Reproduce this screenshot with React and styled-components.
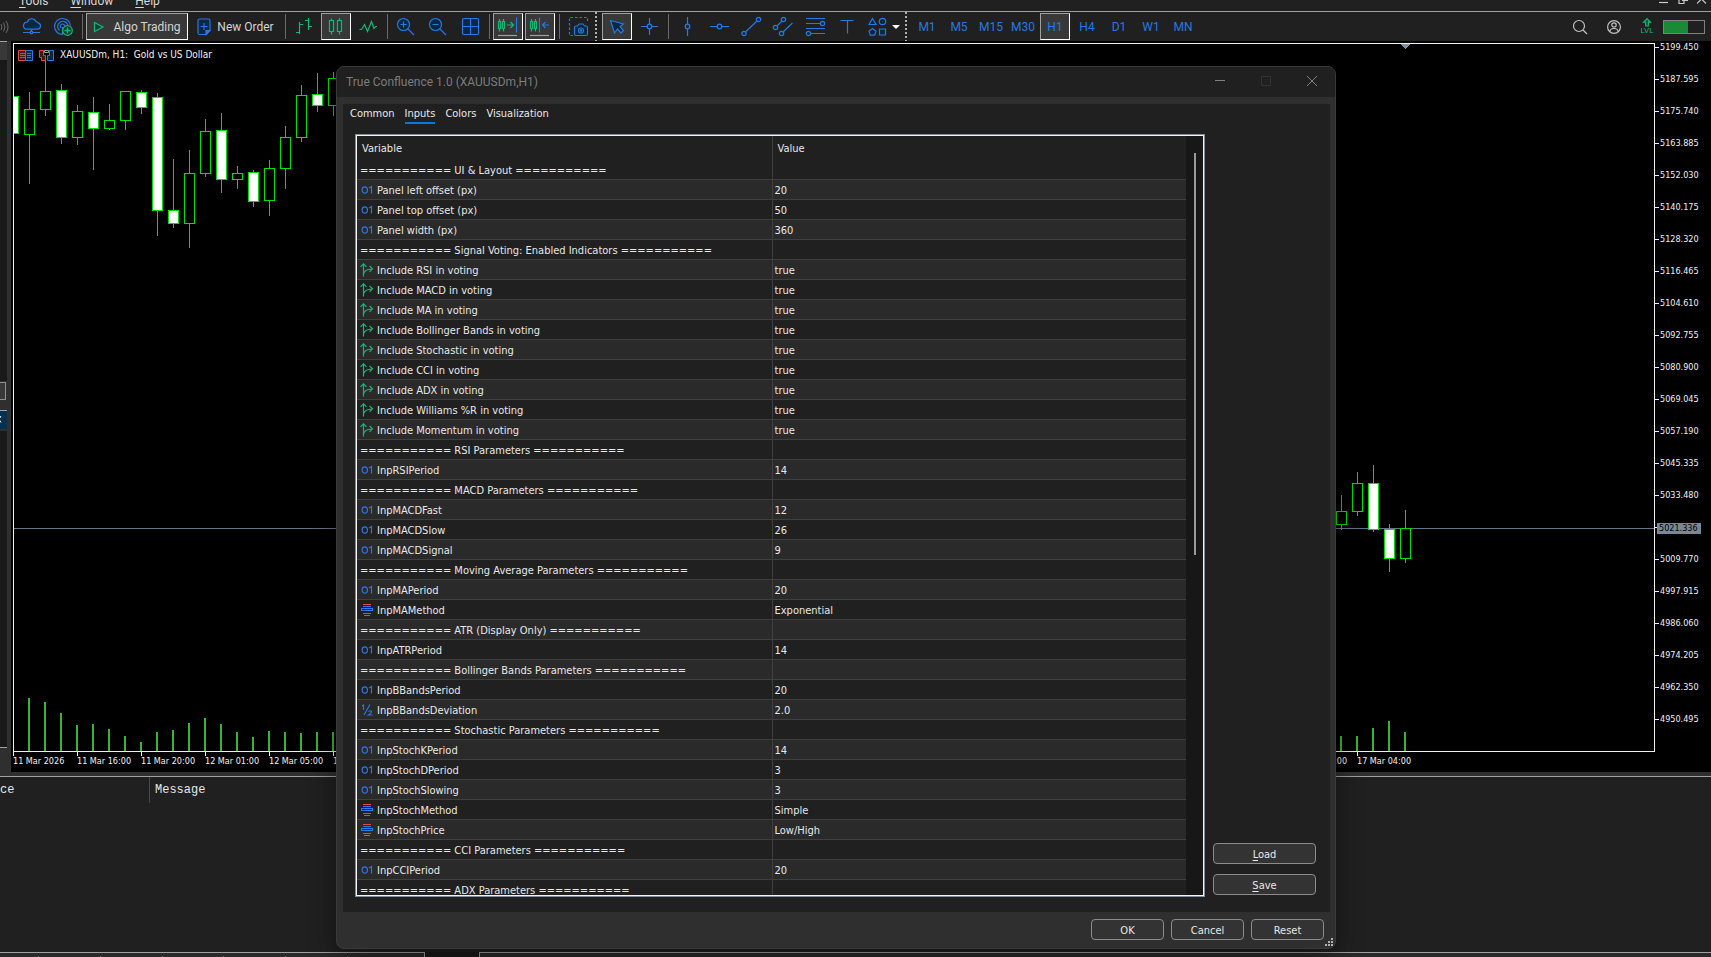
import styled, { createGlobalStyle } from "styled-components";

const blue = '#2678e4';
const green = '#12b877';
const ui = `Roboto, "Noto Sans", sans-serif`;
const small = `"DejaVu Sans Condensed", "DejaVu Sans", sans-serif`;

const GlobalStyle = createGlobalStyle`
  * {
    box-sizing: border-box;
  }

  body {
    margin: 0;
    background: #2f2f2f;
    color: #e8e8e8;
    font-family: ${ui};
    font-size: 12px;
  }

  button {
    font: inherit;
    color: inherit;
    padding: 0;
    border: none;
    background: none;
  }

  svg {
    display: block;
    flex: none;
  }
`;

const Desktop = styled.div`
  position: relative;
  display: flex;
  flex-direction: column;
  height: 100vh;
  min-height: 600px;
  overflow: hidden;
`;

const MenuBar = styled.nav`
  display: flex;
  align-items: flex-end;
  justify-content: space-between;
  height: 12px;
  flex: none;
  padding: 0 4px 2px 19px;
  overflow: hidden;
  background: #202020;
  border-bottom: 1px solid #a0a0a0;
`;

const MenuGroup = styled.div`
  display: flex;
  gap: ${({ $gap }) => $gap}px;
`;

const MenuItem = styled.button`
  line-height: 16px;
  color: #d8d8d8;
  text-underline-offset: 2px;
`;

const ToolBar = styled.div`
  display: flex;
  align-items: center;
  justify-content: space-between;
  height: 29px;
  flex: none;
  background: #202020;
`;

const ToolGroup = styled.div`
  display: flex;
  align-items: center;
  gap: 2px;
`;

const Tool = styled.button`
  display: flex;
  align-items: center;
  justify-content: center;
  gap: ${({ $gap }) => $gap || 0}px;
  width: ${({ $width }) => $width || 30}px;
  height: 27px;
  color: ${({ $color }) => $color || '#d4d4d4'};
  background: ${({ $active }) => ($active ? '#383838' : 'transparent')};
  border: 1px solid;
  border-color: ${({ $active }) => ($active ? '#a0a0a0 #ffffff #ffffff #a0a0a0' : 'transparent')};
  white-space: nowrap;
`;

const EdgeTool = styled(Tool)`
  justify-content: flex-start;
  border: none;
`;

const Divider = styled.span`
  width: 4px;
  height: 25px;
  border-left: 1px solid #6a6a6a;
  margin-left: 2px;
  margin-right: -2px;
`;

const DottedDivider = styled.span`
  width: 5px;
  height: 29px;
  background: repeating-linear-gradient(#b0b0b0 0 2px, transparent 2px 4px) left / 2px 100% no-repeat;
`;

const StatusGroup = styled.div`
  display: flex;
  align-items: center;
  padding-right: 6px;
`;

const StatusButton = styled.button`
  display: flex;
  justify-content: center;
  width: 34px;
`;

const Level = styled.button`
  display: flex;
  flex-direction: column;
  align-items: center;
  width: 32px;
  color: ${green};
  font-size: 8px;
  line-height: 8px;
`;

const Battery = styled.div`
  width: 42px;
  height: 14px;
  border: 1px solid #808080;
`;

const BatteryLevel = styled.div`
  height: 100%;
  background: #1a8a37;
`;

const Workspace = styled.div`
  display: flex;
  flex: 1;
  min-height: 0;
`;

const SideBar = styled.aside`
  display: flex;
  flex-direction: column;
  width: 11px;
  padding: 0 4px 24px 0;
  background: #2f2f2f;
`;

const SidePane = styled.div`
  height: 321px;
  background: #191919;
`;

const SideFill = styled.div`
  flex: 1;
  background: #191919;
  border-bottom: 1px solid #a0a0a0;
`;

const SideTab = styled.div`
  height: 19px;
  overflow: hidden;
  border-top: 1px solid #a0a0a0;
  background: ${({ $active }) => ($active ? '#06304f' : '#383838')};
  margin-bottom: ${({ $active }) => ($active ? 2 : 0)}px;
`;

const SideButton = styled.button`
  display: block;
  width: 6px;
  height: 18px;
  margin: 1px 0 10px;
  background: #383838;
  border: 1px solid #909090;
  border-left: none;
`;

const ChartWindow = styled.main`
  display: grid;
  grid-template-columns: minmax(0, 1fr) 56px;
  grid-template-rows: minmax(0, 1fr) 20px;
  flex: 1;
  min-width: 0;
  padding: 2px 0 0 2px;
  background: #000000;
  color: #f0f0f0;
  font-family: ${small};
  font-size: 9px;
`;

const Plot = styled.div`
  position: relative;
  border: 1px solid #f0f0f0;
  overflow: hidden;
`;

const ChartTitle = styled.div`
  position: absolute;
  top: 4px;
  left: 4px;
  display: flex;
  align-items: center;
  gap: 6px;
  font-size: 10px;
  line-height: 14px;
  white-space: pre;
`;

const PriceAxis = styled.div`
  position: relative;
  overflow: hidden;
  margin-top: -12px;
`;

const Price = styled.div`
  display: flex;
  align-items: center;
  gap: 1px;
  height: 32px;

  &::before {
    content: '';
    width: 4px;
    height: 1px;
    background: #f0f0f0;
  }
`;

const PriceNow = styled.span`
  position: absolute;
  top: 492px;
  left: 2px;
  padding: 0 3px 0 2px;
  line-height: 11px;
  background: #778899;
  color: #000000;
`;

const DateAxis = styled.div`
  display: flex;
  overflow: hidden;
`;

const DateLabel = styled.span`
  flex: none;
  width: 64px;
  line-height: 11px;
  white-space: nowrap;

  &::before {
    content: '';
    display: block;
    width: 1px;
    height: 4px;
    background: #f0f0f0;
  }
`;

const Toolbox = styled.section`
  flex: none;
  height: 176px;
  margin-top: 4px;
  background: #202020;
  border-top: 1px solid #a0a0a0;
  font-family: "Liberation Mono", monospace;
`;

const ToolboxHead = styled.div`
  display: grid;
  grid-template-columns: 149px 1fr;
  line-height: 26px;
`;

const HeadCell = styled.span`
  padding-left: ${({ $first }) => ($first ? 0 : 5)}px;
  border-left: ${({ $first }) => ($first ? 'none' : '1px solid #484848')};
`;

const BottomTabs = styled.footer`
  display: flex;
  flex: none;
  gap: 54px;
  height: 5px;
  background: #191919;
`;

const BottomTab = styled.div`
  display: flex;
  justify-content: space-between;
  align-items: flex-end;
  flex: ${({ $width }) => ($width ? `none` : 1)};
  width: ${({ $width }) => ($width ? `${$width}px` : 'auto')};
  padding: 0 76px 0 38px;
  background: #2a2a2a;
  border: solid #a0a0a0;
  border-width: ${({ $width }) => ($width ? '1px 1px 0 0' : '1px 0 0 1px')};
`;

const Tick = styled.span`
  width: 1px;
  height: 1px;
  background: #707070;
`;

const Dialog = styled.section`
  position: absolute;
  top: 66px;
  right: 375px;
  bottom: 8px;
  left: 336px;
  display: flex;
  flex-direction: column;
  background: #2f2f2f;
  border: 1px solid #3a3a3a;
  border-radius: 8px;
  box-shadow: 0 8px 28px rgba(0, 0, 0, 0.45);
  overflow: hidden;
`;

const TitleBar = styled.header`
  display: flex;
  align-items: center;
  justify-content: space-between;
  height: 30px;
  flex: none;
  padding-left: 9px;
  background: #202020;
  color: #7c7c7c;
`;

const Title = styled.h1`
  margin: 0;
  font-size: 12px;
  font-weight: 400;
`;

const WindowButton = styled.button`
  width: 46px;
  height: 28px;
  color: ${({ disabled }) => (disabled ? '#333333' : '#808080')};

  svg {
    margin: 0 auto 2px;
  }
`;

const Content = styled.div`
  display: flex;
  flex-direction: column;
  flex: 1;
  min-height: 0;
  margin: 7px 5px 0 6px;
  padding: 0 14px 15px 12px;
  background: #202020;
  font-family: ${small};
  font-size: 11px;
`;

const Tabs = styled.div`
  display: flex;
  gap: 10px;
  height: 30px;
  margin-left: -5px;
`;

const TabButton = styled.button`
  height: 20px;
  padding-top: 1px;
  line-height: 17px;
  border-bottom: 2px solid ${({ $active }) => ($active ? '#0a78d4' : 'transparent')};
`;

const Columns = styled.div`
  display: flex;
  gap: 8px;
  flex: 1;
  min-height: 0;
`;

const ListFrame = styled.div`
  display: flex;
  flex: 1;
  min-width: 0;
  overflow: hidden;
  border: 1px solid #828d99;
  outline: 1px solid #f4f4f4;
  outline-offset: -2px;
  padding: 1px;
`;

const ListBody = styled.div`
  flex: 1;
  min-width: 0;
  overflow: hidden;
`;

const ScrollBar = styled.div`
  width: 17px;
  padding: 17px 7px 0 8px;
  background: #171717;
`;

const Thumb = styled.div`
  height: 402px;
  background: #999999;
`;

const InputTable = styled.table`
  width: 100%;
  table-layout: fixed;
  border-collapse: separate;
  border-spacing: 0;
`;

const VariableHead = styled.th`
  width: ${({ $value }) => ($value ? 'auto' : 'calc(50% - 2px)')};
  height: 24px;
  padding: 0 5px;
  text-align: left;
  font-weight: 400;
  border-left: ${({ $value }) => ($value ? '1px solid #404040' : 'none')};
`;

const Row = styled.tr`
  background: ${({ $alt }) => ($alt ? '#2a2a2a' : '#202020')};
`;

const Cell = styled.td`
  height: 20px;
  padding: ${({ $value }) => ($value ? '2px 2px 0' : '2px 3px 0')};
  border-bottom: 1px solid #404040;
  border-left: ${({ $value }) => ($value ? '1px solid #404040' : 'none')};
  white-space: nowrap;
`;

const Variable = styled.div`
  display: flex;
  align-items: center;
  gap: 4px;
`;

const IconSlot = styled.span`
  display: flex;
  justify-content: center;
  width: 13px;
  flex: none;
  margin: -2px 0;
  padding-bottom: 2px;
`;

const Actions = styled.div`
  display: flex;
  flex-direction: column;
  justify-content: flex-end;
  gap: 10px;
  width: 103px;
  padding-bottom: 2px;
`;

const PushButton = styled.button`
  width: ${({ $wide }) => ($wide ? '103px' : '73px')};
  height: 21px;
  padding-top: 1px;
  background: #333333;
  border: 1px solid #8c8c8c;
  border-radius: 4px;
  text-underline-offset: 2px;
`;

const Footer = styled.footer`
  display: flex;
  justify-content: flex-end;
  align-items: flex-start;
  gap: 7px;
  height: 36px;
  flex: none;
  padding: 7px 11px 0 0;
  font-family: ${small};
  font-size: 11px;
`;

const Grip = styled.span`
  position: absolute;
  right: 2px;
  bottom: 2px;
`;

const iconProps = {
  width: 22,
  height: 21,
  viewBox: '0 0 22 21',
  fill: 'none',
  stroke: blue,
  strokeWidth: 1.2,
};

const navy = '#08283f';

const icons = {
  cloud: (
    <svg {...iconProps}>
      <path fill={navy} d="M6 13.200h11.500a3.200 3.200 0 0 0 .6-6.300 2.600 2.600 0 0 0-2-1.200A4.600 4.600 0 0 0 7.400 6 3.700 3.700 0 0 0 6 13.200z" />
      <path d="M11.500 13.500v2M3 16.500h7M13 16.500h7" />
      <circle cx="11.500" cy="16.500" r="1.300" />
    </svg>
  ),
  signals: (
    <svg {...iconProps}>
      <path d="M10.500 18.500A8 8 0 1 1 18.500 9.500M7.500 14.500A5.200 5.200 0 1 1 15.800 9M9 12A2.300 2.300 0 1 1 12.800 9.800M10.500 11v8" />
      <circle cx="15.500" cy="14.500" r="4.800" fill="#0b3a2a" stroke={green} />
      <path stroke={green} strokeWidth="1.500" d="M12.500 14.500h6M15.500 11.500v6" />
    </svg>
  ),
  play: (
    <svg width="12" height="12" viewBox="0 0 12 12" fill="none" stroke={green} strokeWidth="1.200">
      <path fill="#123f2e" d="M1.500 1.500v9l8.500-4.500z" />
    </svg>
  ),
  order: (
    <svg width="14" height="18" viewBox="0 0 14 18" fill="none" stroke={blue} strokeWidth="1.200">
      <path fill={navy} d="M2.500 1h9q1.500 0 1.500 1.500v10L9 16.500H2.500Q1 16.500 1 15V2.500Q1 1 2.500 1z" />
      <path d="M7 5v7M3.500 8.500h7" />
      <path fill={blue} d="M9 16.500v-4h4z" />
    </svg>
  ),
  bars: (
    <svg {...iconProps} stroke={green}>
      <path d="M6.500 6v12M3 16.500h3.500M6.500 8.500H10M15.500 2v12M12 4.500h3.500M15.500 10.500H19" />
    </svg>
  ),
  candles: (
    <svg {...iconProps} stroke={green}>
      <path fill="#12402f" d="M4.500 4.500h4v11h-4zM12.500 4.500h4v11h-4z" />
      <path d="M6.500 2.500v2M6.500 15.500v3M14.500 2v2.500M14.500 15.500v3" />
    </svg>
  ),
  line: (
    <svg {...iconProps} stroke={green}>
      <path d="M2.500 13.500h2l3-5 3 7 4-10 2.500 7 1.500-2h1.500" />
    </svg>
  ),
  zoomIn: (
    <svg {...iconProps}>
      <circle cx="8.500" cy="8.500" r="6" fill={navy} />
      <path d="M13 13l6 6M8.500 5.500v6M5.500 8.500h6" />
    </svg>
  ),
  zoomOut: (
    <svg {...iconProps}>
      <circle cx="8.500" cy="8.500" r="6" fill={navy} />
      <path d="M13 13l6 6M5.500 8.500h6" />
    </svg>
  ),
  grid: (
    <svg {...iconProps}>
      <rect x="3.500" y="2.500" width="16" height="16" rx="1.500" fill={navy} />
      <path d="M11.500 2.500v16M3.500 10.500h16" />
    </svg>
  ),
  scroll: (
    <svg {...iconProps}>
      <path stroke={green} fill="#12402f" d="M1.500 5.500h2v7h-2zM5.500 5.500h2v7h-2z" />
      <path stroke={green} d="M2.500 3v2.500M2.500 12.500v3M6.500 3v2.500M6.500 12.500v3M10 9h6.500M13.500 6l3 3-3 3" />
      <path d="M19.500 1.500v15" />
      <path stroke="#a0a0a0" d="M1 19.500h19" />
    </svg>
  ),
  shift: (
    <svg {...iconProps}>
      <path stroke={green} fill="#12402f" d="M1.500 5.500h2v7h-2zM5.500 5.500h2v7h-2z" />
      <path stroke={green} d="M2.500 3v2.500M2.500 12.500v3M6.500 3v2.500M6.500 12.500v3" />
      <path d="M10.500 1.500v15M20 9h-6.500M16.500 6l-3 3 3 3" />
      <path stroke="#a0a0a0" d="M1 19.500h19" />
    </svg>
  ),
  camera: (
    <svg {...iconProps}>
      <path strokeDasharray="2.500 2" d="M6 19.500H2.500v-18h18V7" />
      <path fill={navy} d="M7.500 11.500q0-1.500 1.500-1.500h1.500l1.500-2h4l1.500 2H19q1.500 0 1.500 1.500V18q0 1.500-1.500 1.500H9q-1.500 0-1.500-1.500z" />
      <circle cx="14" cy="14.500" r="2.500" />
      <circle cx="14" cy="14.500" r=".6" />
    </svg>
  ),
  cursor: (
    <svg {...iconProps}>
      <path fill={navy} d="M4.500 4.500l4 12.500 3-4 3.500 4 2.500-2.500-3.500-4 3.500-2.500z" />
    </svg>
  ),
  cross: (
    <svg {...iconProps}>
      <circle cx="11.500" cy="10.500" r="2.300" fill={navy} />
      <path d="M11.500 2v6M11.500 13v6M3 10.500h6M14 10.500h6" />
    </svg>
  ),
  vertical: (
    <svg {...iconProps}>
      <circle cx="11.500" cy="10.500" r="2.300" fill={navy} />
      <path d="M11.500 1v7M11.500 13v7" />
    </svg>
  ),
  horizontal: (
    <svg {...iconProps}>
      <circle cx="11.500" cy="10.500" r="2.300" fill={navy} />
      <path d="M2 10.500h7M14 10.500h7" />
    </svg>
  ),
  trend: (
    <svg {...iconProps}>
      <path d="M5.500 16L17 5" />
      <circle cx="4" cy="17.500" r="2.200" fill={navy} />
      <circle cx="18.500" cy="3.500" r="2.200" fill={navy} />
    </svg>
  ),
  channel: (
    <svg {...iconProps}>
      <path d="M5 10l5-5M11 16l9.500-9" />
      <circle cx="3.500" cy="11.500" r="2.200" fill={navy} />
      <circle cx="11.500" cy="3.500" r="2.200" fill={navy} />
      <circle cx="9.500" cy="17.500" r="2.200" fill={navy} />
    </svg>
  ),
  fibo: (
    <svg {...iconProps}>
      <path d="M2 2.500h19M2 7.500h14M2 12.500h19M7 17.500h14" />
      <circle cx="18.500" cy="7.500" r="2.200" fill={navy} />
      <circle cx="4.500" cy="17.500" r="2.200" fill={navy} />
    </svg>
  ),
  text: (
    <svg {...iconProps}>
      <path d="M4.500 4.500h13M11.500 4.500v13" />
    </svg>
  ),
  shapes: (
    <svg {...iconProps}>
      <path fill={navy} d="M5.500 2.500l3.500 6H2zM12.500 13h6v6h-6zM5.500 12.500l3.500 2.700-1.300 4H3.300L2 15.200z" />
      <circle cx="15.500" cy="5.500" r="3.200" fill={navy} />
    </svg>
  ),
  waves: (
    <svg width="10" height="14" viewBox="0 0 10 14" fill="none" stroke="#686868">
      <path d="M1 4q2 3 0 6M3.500 2.500q3 4.500 0 9M6 1q4 6 0 12" />
    </svg>
  ),
  search: (
    <svg width="16" height="16" viewBox="0 0 16 16" fill="none" stroke="#c0c0c0" strokeWidth="1.200">
      <circle cx="7" cy="7" r="5.500" />
      <path d="M11 11l4 4" />
    </svg>
  ),
  user: (
    <svg width="16" height="16" viewBox="0 0 16 16" fill="none" stroke="#c0c0c0" strokeWidth="1.200">
      <circle cx="8" cy="8" r="6.400" />
      <circle cx="8" cy="6" r="2.200" />
      <path d="M4 12.500q0-3 4-3t4 3" />
    </svg>
  ),
  number: (
    <svg width="12" height="10" viewBox="0 0 12 10" fill="none" stroke={blue} strokeWidth="1.200">
      <ellipse cx="3.800" cy="5" rx="2.700" ry="3.200" />
      <path d="M8 3l2.500-1.500V8.500" />
    </svg>
  ),
  half: (
    <svg width="12" height="14" viewBox="0 0 12 14" fill="none" stroke={blue} strokeWidth="1.200">
      <path d="M1 3l1.500-1v5M9 1.500L3 12M7.500 8.500q2-1.500 3 0 .3 1-3 3.500h4" />
    </svg>
  ),
  branch: (
    <svg width="14" height="14" viewBox="0 0 14 14" fill="none" stroke={green} strokeWidth="1.200">
      <path d="M3.500 13.500V1M.5 3.800l3-3 3 3M3.500 11q1-4.700 8.500-5M9.500 2.800l3 3-3 3" />
    </svg>
  ),
  list: (
    <svg width="12" height="12" viewBox="0 0 12 12" fill="none" shapeRendering="crispEdges">
      <path stroke="#e04848" d="M2 .5h8M2 9.500h8M3 11.500h6" />
      <path stroke={blue} d="M2 2.500h8M.5 4.500h11v2H.5z" />
    </svg>
  ),
};

// body top/bottom and wick high/low, one bar every 16px
const candles = [
  [0, 96, 96, 134, 134, 1],
  [1, 92, 109, 135, 184, 0],
  [2, 58, 91, 110, 116, 0],
  [3, 84, 90, 138, 144, 1],
  [4, 105, 111, 138, 145, 0],
  [5, 97, 112, 129, 170, 1],
  [6, 104, 120, 129, 130, 0],
  [7, 91, 91, 121, 130, 0],
  [8, 90, 92, 108, 114, 1],
  [9, 93, 97, 211, 236, 1],
  [10, 159, 210, 224, 228, 1],
  [11, 150, 173, 224, 248, 0],
  [12, 119, 131, 174, 177, 0],
  [13, 113, 130, 180, 193, 1],
  [14, 166, 173, 180, 189, 0],
  [15, 170, 172, 202, 207, 1],
  [16, 160, 168, 201, 216, 0],
  [17, 126, 137, 169, 189, 0],
  [18, 85, 95, 138, 142, 0],
  [19, 73, 94, 106, 112, 1],
  [20, 72, 78, 106, 116, 0],
  [83, 495, 511, 525, 530, 0],
  [84, 472, 483, 512, 516, 0],
  [85, 465, 483, 530, 532, 1],
  [86, 524, 529, 559, 572, 1],
  [87, 510, 528, 559, 563, 0],
];

const volumes = [
  [1, 53], [2, 49], [3, 38], [4, 26], [5, 27], [6, 22], [7, 15], [8, 9], [9, 19], [10, 21],
  [11, 28], [12, 33], [13, 27], [14, 19], [15, 14], [16, 20], [17, 19], [18, 18], [19, 19], [20, 19],
  [83, 15], [84, 15], [85, 23], [86, 30], [87, 19],
];

const prices = [
  '5199.450', '5187.595', '5175.740', '5163.885', '5152.030', '5140.175', '5128.320', '5116.465',
  '5104.610', '5092.755', '5080.900', '5069.045', '5057.190', '5045.335', '5033.480', '',
  '5009.770', '4997.915', '4986.060', '4974.205', '4962.350', '4950.495',
];

const dates = [
  '11 Mar 2026', '11 Mar 16:00', '11 Mar 20:00', '12 Mar 01:00', '12 Mar 05:00', '12 Mar 09:00',
  ...Array(14).fill(''), '17 Mar 00:00', '17 Mar 04:00',
];

const line = '='.repeat(11);

const inputs = [
  { section: 'UI & Layout' },
  { icon: 'number', name: 'Panel left offset (px)', value: '20' },
  { icon: 'number', name: 'Panel top offset (px)', value: '50' },
  { icon: 'number', name: 'Panel width (px)', value: '360' },
  { section: 'Signal Voting: Enabled Indicators' },
  ...['RSI', 'MACD', 'MA', 'Bollinger Bands', 'Stochastic', 'CCI', 'ADX', 'Williams %R', 'Momentum'].map((name) => ({
    icon: 'branch', name: `Include ${name} in voting`, value: 'true',
  })),
  { section: 'RSI Parameters' },
  { icon: 'number', name: 'InpRSIPeriod', value: '14' },
  { section: 'MACD Parameters' },
  { icon: 'number', name: 'InpMACDFast', value: '12' },
  { icon: 'number', name: 'InpMACDSlow', value: '26' },
  { icon: 'number', name: 'InpMACDSignal', value: '9' },
  { section: 'Moving Average Parameters' },
  { icon: 'number', name: 'InpMAPeriod', value: '20' },
  { icon: 'list', name: 'InpMAMethod', value: 'Exponential' },
  { section: 'ATR (Display Only)' },
  { icon: 'number', name: 'InpATRPeriod', value: '14' },
  { section: 'Bollinger Bands Parameters' },
  { icon: 'number', name: 'InpBBandsPeriod', value: '20' },
  { icon: 'half', name: 'InpBBandsDeviation', value: '2.0' },
  { section: 'Stochastic Parameters' },
  { icon: 'number', name: 'InpStochKPeriod', value: '14' },
  { icon: 'number', name: 'InpStochDPeriod', value: '3' },
  { icon: 'number', name: 'InpStochSlowing', value: '3' },
  { icon: 'list', name: 'InpStochMethod', value: 'Simple' },
  { icon: 'list', name: 'InpStochPrice', value: 'Low/High' },
  { section: 'CCI Parameters' },
  { icon: 'number', name: 'InpCCIPeriod', value: '20' },
  { section: 'ADX Parameters' },
];

const Candles = () => {
  return (
    <svg width="100%" height="100%" shapeRendering="crispEdges">
      <rect x="0" y="484" width="100%" height="1" fill="#64748b" />
      {volumes.map(([i, h]) => (
        <rect key={i} x={i * 16 - 2} y={707 - h} width="2" height={h} fill="#2fb92f" />
      ))}
      {candles.map(([i, high, top, bottom, low, down]) => (
        <g key={i}>
          <rect x={i * 16 - 1} y={high - 44} width="1" height={low - high} fill="#00e000" />
          <rect
            x={i * 16 - 5.5}
            y={top - 43.5}
            width="10"
            height={bottom - top - 1}
            fill={down ? '#ffffff' : '#000000'}
            stroke="#00e000"
          />
        </g>
      ))}
      <path fill="#8090a4" d="M1387 0h9l-4.500 5z" />
    </svg>
  );
};

const Toolbar = () => {
  return (
    <ToolBar>
      <ToolGroup>
        <EdgeTool $width={14} aria-label="Signals">{icons.waves}</EdgeTool>
        <Tool aria-label="Cloud">{icons.cloud}</Tool>
        <Tool aria-label="Hosting">{icons.signals}</Tool>
        <Divider />
        <Tool $active $width={102} $gap={8}>{icons.play}Algo Trading</Tool>
        <Tool $width={91} $gap={6}>{icons.order}New Order</Tool>
        <Divider />
        <Tool aria-label="Bars">{icons.bars}</Tool>
        <Tool $active aria-label="Candles">{icons.candles}</Tool>
        <Tool aria-label="Line">{icons.line}</Tool>
        <Divider />
        <Tool aria-label="Zoom in">{icons.zoomIn}</Tool>
        <Tool aria-label="Zoom out">{icons.zoomOut}</Tool>
        <Tool aria-label="Tile windows">{icons.grid}</Tool>
        <Divider />
        <Tool $active aria-label="Auto scroll">{icons.scroll}</Tool>
        <Tool $active aria-label="Chart shift">{icons.shift}</Tool>
        <Divider />
        <Tool aria-label="Screenshot">{icons.camera}</Tool>
        <DottedDivider />
        <Tool $active aria-label="Cursor">{icons.cursor}</Tool>
        <Tool aria-label="Crosshair">{icons.cross}</Tool>
        <Divider />
        <Tool aria-label="Vertical line">{icons.vertical}</Tool>
        <Tool aria-label="Horizontal line">{icons.horizontal}</Tool>
        <Tool aria-label="Trendline">{icons.trend}</Tool>
        <Tool aria-label="Channel">{icons.channel}</Tool>
        <Tool aria-label="Fibonacci">{icons.fibo}</Tool>
        <Tool aria-label="Text">{icons.text}</Tool>
        <Tool $width={39} $gap={3} aria-label="Shapes">
          {icons.shapes}
          <svg width="8" height="5" viewBox="0 0 8 5"><path fill="#ffffff" d="M0 1h8L4 5z" /></svg>
        </Tool>
        <DottedDivider />
        {['M1', 'M5', 'M15', 'M30', 'H1', 'H4', 'D1', 'W1', 'MN'].map((frame) => (
          <Tool key={frame} $color={blue} $active={frame === 'H1'}>{frame}</Tool>
        ))}
      </ToolGroup>
      <StatusGroup>
        <StatusButton aria-label="Search">{icons.search}</StatusButton>
        <StatusButton aria-label="Account">{icons.user}</StatusButton>
        <Level>
          <svg width="10" height="9" viewBox="0 0 10 9" fill="#12402f" stroke={green} strokeWidth="1.200">
            <path d="M5 .8l3.500 3.400H6.300V8H3.700V4.200H1.500z" />
          </svg>
          LVL
        </Level>
        <Battery>
          <BatteryLevel style={{ width: '60%' }} />
        </Battery>
      </StatusGroup>
    </ToolBar>
  );
};

const InputsDialog = () => {
  return (
    <Dialog role="dialog">
      <TitleBar>
        <Title>True Confluence 1.0 (XAUUSDm,H1)</Title>
        <MenuGroup $gap={0}>
          <WindowButton aria-label="Minimize">
            <svg width="10" height="10" viewBox="0 0 10 10" stroke="currentColor"><path d="M0 4.500h10" /></svg>
          </WindowButton>
          <WindowButton aria-label="Maximize" disabled>
            <svg width="10" height="10" viewBox="0 0 10 10" fill="none" stroke="currentColor"><path d="M.5.5h9v9h-9z" /></svg>
          </WindowButton>
          <WindowButton aria-label="Close">
            <svg width="10" height="10" viewBox="0 0 10 10" stroke="currentColor"><path d="M0 0l10 10M10 0L0 10" /></svg>
          </WindowButton>
        </MenuGroup>
      </TitleBar>
      <Content>
        <Tabs>
          {['Common', 'Inputs', 'Colors', 'Visualization'].map((tab) => (
            <TabButton key={tab} $active={tab === 'Inputs'}>{tab}</TabButton>
          ))}
        </Tabs>
        <Columns>
          <ListFrame>
            <ListBody>
              <InputTable>
                <thead>
                  <tr>
                    <VariableHead>Variable</VariableHead>
                    <VariableHead $value>Value</VariableHead>
                  </tr>
                </thead>
                <tbody>
                  {inputs.map(({ section, icon, name, value }, index) => (
                    <Row key={section || name} $alt={index % 2 === 1}>
                      <Cell>
                        {section ? `${line} ${section} ${line}` : (
                          <Variable>
                            <IconSlot>{icons[icon]}</IconSlot>
                            {name}
                          </Variable>
                        )}
                      </Cell>
                      <Cell $value>{value}</Cell>
                    </Row>
                  ))}
                </tbody>
              </InputTable>
            </ListBody>
            <ScrollBar>
              <Thumb />
            </ScrollBar>
          </ListFrame>
          <Actions>
            <PushButton $wide><u>L</u>oad</PushButton>
            <PushButton $wide><u>S</u>ave</PushButton>
          </Actions>
        </Columns>
      </Content>
      <Footer>
        <PushButton>OK</PushButton>
        <PushButton>Cancel</PushButton>
        <PushButton>Reset</PushButton>
      </Footer>
      <Grip>
        <svg width="8" height="8" viewBox="0 0 8 8" fill="#b0b0b0">
          <path d="M6 0h2v2H6zM3 3h2v2H3zM6 3h2v2H6zM0 6h2v2H0zM3 6h2v2H3zM6 6h2v2H6z" />
        </svg>
      </Grip>
    </Dialog>
  );
};

const App = () => {
  return (
    <Desktop>
      <GlobalStyle />
      <MenuBar>
        <MenuGroup $gap={22}>
          <MenuItem><u>T</u>ools</MenuItem>
          <MenuItem><u>W</u>indow</MenuItem>
          <MenuItem><u>H</u>elp</MenuItem>
        </MenuGroup>
        <MenuGroup $gap={9}>
          <svg width="10" height="10" viewBox="0 0 10 10" stroke="#c8c8c8" strokeWidth="1.200"><path d="M0 3.500h9" /></svg>
          <svg width="10" height="10" viewBox="0 0 10 10" fill="none" stroke="#c8c8c8" strokeWidth="1.200"><path d="M1 0v4.500h5V0M4 1.500h6M9 0v1.500" /></svg>
          <svg width="10" height="10" viewBox="0 0 10 10" stroke="#c8c8c8" strokeWidth="1.200"><path d="M0 4.500L9-4.500M0-4.500l9 9" /></svg>
        </MenuGroup>
      </MenuBar>
      <Toolbar />
      <Workspace>
        <SideBar>
          <SideTab />
          <SidePane />
          <SideButton aria-label="Panel" />
          <SideTab $active>
            <svg width="7" height="18" viewBox="0 0 7 18" stroke="#ffffff"><path d="M-3 11.500L1 5M-3 5l4 6.500" /></svg>
          </SideTab>
          <SideFill />
        </SideBar>
        <ChartWindow>
          <Plot>
            <Candles />
            <ChartTitle>
              <svg width="15" height="11" viewBox="0 0 15 11" fill="none">
                <path stroke="#e04848" fill="#401818" d="M7.500.5h-7v10h7M2 3.500h5M2 5.500h5M2 7.500h5" />
                <path stroke={blue} fill={navy} d="M7.500.5h7v10h-7zM9 3.500h4M9 5.500h4M9 7.500h4" />
              </svg>
              <svg width="15" height="11" viewBox="0 0 15 11" fill="none">
                <path stroke="#e04848" fill="#401818" d="M.5.5h4v5h2v5h-4v-3h-2z" />
                <path stroke={blue} fill={navy} d="M14.500.5h-4v5h-2v5h6z" />
                <path stroke="#a0a0a0" d="M5.500.5h4v2h-4z" />
              </svg>
              {'XAUUSDm, H1:  Gold vs US Dollar'}
            </ChartTitle>
          </Plot>
          <PriceAxis>
            {prices.map((price) => (
              <Price key={price}>{price}</Price>
            ))}
            <PriceNow>5021.336</PriceNow>
          </PriceAxis>
          <DateAxis>
            {dates.map((date, index) => (
              <DateLabel key={index}>{date}</DateLabel>
            ))}
          </DateAxis>
        </ChartWindow>
      </Workspace>
      <Toolbox>
        <ToolboxHead>
          <HeadCell $first>ce</HeadCell>
          <HeadCell>Message</HeadCell>
        </ToolboxHead>
      </Toolbox>
      <BottomTabs>
        <BottomTab $width={425}>
          {[0, 1, 2, 3, 4, 5].map((tick) => (
            <Tick key={tick} />
          ))}
        </BottomTab>
        <BottomTab />
      </BottomTabs>
      <InputsDialog />
    </Desktop>
  );
};

export default App;
